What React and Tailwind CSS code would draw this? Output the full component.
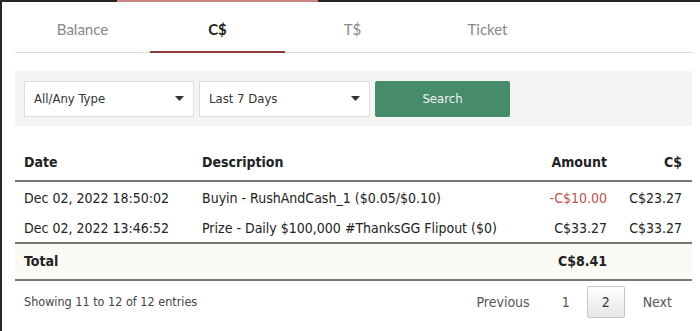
import React from "react";

const tbl = { fontFamily: '"DejaVu Sans Condensed", "Liberation Sans", sans-serif' };

function Caret() {
  return (
    <svg width="9" height="5" viewBox="0 0 9 5" className="shrink-0">
      <path d="M0 0h9L4.5 5z" fill="#333" />
    </svg>
  );
}

export default function App() {
  return (
    <div className="w-[700px] h-[331px] bg-white overflow-hidden flex flex-col" style={tbl}>
      <div className="flex h-[2px] shrink-0">
        <div className="w-[117px] bg-[#262626]" />
        <div className="w-[201px] bg-[#c98585]" />
        <div className="flex-1 bg-[#262626]" />
      </div>
      <div className="flex flex-1">
        <div className="w-[2px] bg-[#262626]" />
        <div className="flex-1 pl-[13px] pr-[8px]">
          {/* Tabs */}
          <div className="flex h-[51px] border-b border-[#dcdcdc] text-[15px] text-[#888]" style={{ fontFamily: 'Lato, "Open Sans", sans-serif' }}>
            <div className="w-[135px] flex items-center justify-center pt-[5px]">Balance</div>
            <div className="w-[135px] flex items-center justify-center pt-[5px] font-bold text-[#222] border-b-2 border-[#8b3a3a] -mb-px">C$</div>
            <div className="w-[135px] flex items-center justify-center pt-[5px]">T$</div>
            <div className="w-[135px] flex items-center justify-center pt-[5px]">Ticket</div>
          </div>
          {/* Filters */}
          <div className="mt-[18px] h-[55px] bg-[#f4f4f4] flex items-center px-[9px] gap-[5px]">
            <div className="w-[170px] h-[36px] bg-white border border-[#dedede] flex items-center justify-between pl-[9px] pr-[9px] text-[13px] text-[#333]">
              <span>All/Any Type</span>
              <Caret />
            </div>
            <div className="w-[171px] h-[36px] bg-white border border-[#dedede] flex items-center justify-between pl-[9px] pr-[9px] text-[13px] text-[#333]">
              <span>Last 7 Days</span>
              <Caret />
            </div>
            <div className="w-[135px] h-[36px] bg-[#468c6b] rounded-[2px] flex items-center justify-center text-[13px] text-[#f2f2f2]">
              Search
            </div>
          </div>
          {/* Table */}
          <div className="mt-[19px] text-[14px] text-[#222]">
            <div className="flex h-[37px] items-center font-bold border-b-2 border-[#777]">
              <div className="w-[178px] pl-[9px]">Date</div>
              <div className="flex-1 pl-[9px]">Description</div>
              <div className="w-[100px] text-right pr-[9px]">Amount</div>
              <div className="w-[76px] text-right pr-[10px]">C$</div>
            </div>
            <div className="flex h-[32px] items-center">
              <div className="w-[178px] pl-[9px]">Dec 02, 2022 18:50:02</div>
              <div className="flex-1 pl-[9px]">Buyin - RushAndCash_1 ($0.05/$0.10)</div>
              <div className="w-[100px] text-right pr-[9px] text-[#b85450]">-C$10.00</div>
              <div className="w-[76px] text-right pr-[10px]">C$23.27</div>
            </div>
            <div className="flex h-[28px] items-center">
              <div className="w-[178px] pl-[9px]">Dec 02, 2022 13:46:52</div>
              <div className="flex-1 pl-[9px]">Prize - Daily $100,000 #ThanksGG Flipout ($0)</div>
              <div className="w-[100px] text-right pr-[9px]">C$33.27</div>
              <div className="w-[76px] text-right pr-[10px]">C$33.27</div>
            </div>
            <div className="flex h-[39px] items-center font-bold bg-[#fbfaf5] border-y-2 border-[#777]">
              <div className="w-[178px] pl-[9px]">Total</div>
              <div className="flex-1 pl-[9px]"></div>
              <div className="w-[100px] text-right pr-[9px]">C$8.41</div>
              <div className="w-[76px] text-right pr-[10px]"></div>
            </div>
          </div>
          {/* Footer */}
          <div className="flex items-center justify-between mt-[5px] h-[32px] text-[#444]">
            <div className="pl-[9px] text-[12.5px]">Showing 11 to 12 of 12 entries</div>
            <div className="flex items-center text-[14px] text-[#555]">
              <span className="mr-[32px]">Previous</span>
              <span className="mr-[17px]">1</span>
              <span className="w-[38px] h-[32px] flex items-center justify-center border border-[#c8c8c8] rounded-[2px] bg-gradient-to-b from-white to-[#e6e6e6] text-[#333]">2</span>
              <span className="ml-[18px] mr-[20px]">Next</span>
            </div>
          </div>
        </div>
      </div>
    </div>
  );
}
